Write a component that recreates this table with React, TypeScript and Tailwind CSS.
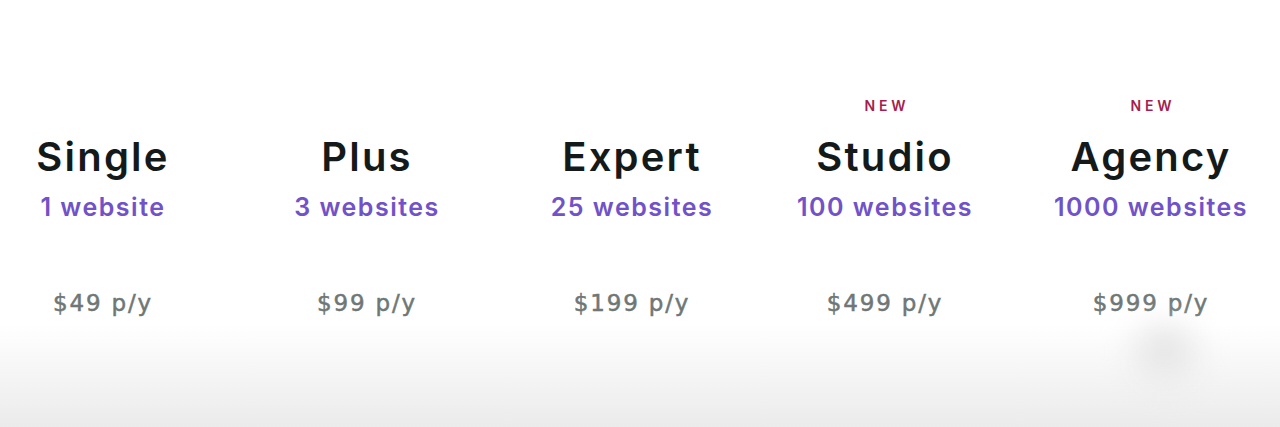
const plans = [
  { name: 'Single', sites: '1 website', price: '$49 p/y', isNew: false },
  { name: 'Plus', sites: '3 websites', price: '$99 p/y', isNew: false },
  { name: 'Expert', sites: '25 websites', price: '$199 p/y', isNew: false },
  { name: 'Studio', sites: '100 websites', price: '$499 p/y', isNew: true },
  { name: 'Agency', sites: '1000 websites', price: '$999 p/y', isNew: true },
]

export default function App() {
  return (
    <div className="relative w-[1280px] h-[427px] overflow-hidden bg-gradient-to-b from-white from-[76%] to-[#ebebeb]">
      <div className="grid grid-cols-[206px_322px_208px_298px_234px] pt-[97px]">
        {plans.map((plan) => (
          <div key={plan.name} className="flex flex-col items-center">
            <div className="h-[18px] pl-[0.28em] text-[14px] font-semibold tracking-[0.28em] text-[#a51d50] leading-[18px] font-['Inter',sans-serif]">
              {plan.isNew ? 'NEW' : ''}
            </div>
            <h3 className="mt-[19px] text-[40px] leading-[46px] font-semibold tracking-[0.055em] text-[#141a1a] font-['Inter',sans-serif]">
              {plan.name}
            </h3>
            <div className="mt-[12px] text-[25px] leading-[30px] font-semibold tracking-[0.06em] text-[#7152c8] font-['Inter',sans-serif]">
              {plan.sites}
            </div>
            <div className="mt-[67px] text-[23px] leading-[28px] tracking-[0.08em] text-[#6f7776] [-webkit-text-stroke:0.5px_#6f7776] font-['DejaVu_Sans',sans-serif]">
              {plan.price}
            </div>
          </div>
        ))}
      </div>
      <div className="absolute left-[1135px] top-[325px] w-[60px] h-[55px] rounded-full bg-[#e6e6e6] blur-lg" />
    </div>
  )
}
